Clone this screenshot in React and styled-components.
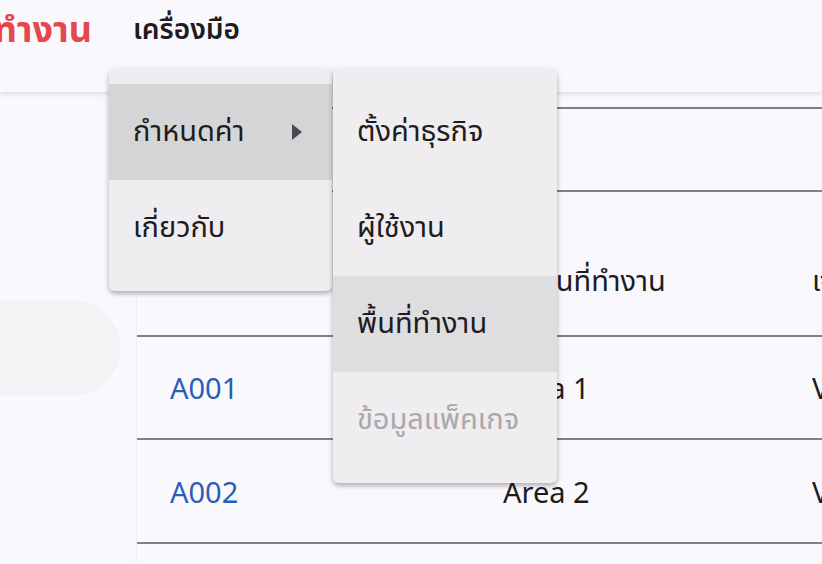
import React from "react";
import styled, { createGlobalStyle } from "styled-components";

const GlobalStyle = createGlobalStyle`
  html, body { margin: 0; padding: 0; }
  body {
    width: 822px;
    height: 564px;
    overflow: hidden;
    background: #f9f8fd;
    font-family: "Noto Sans", "Noto Sans Thai", sans-serif;
    color: #1d1c20;
  }
  * { box-sizing: border-box; }
`;

const Page = styled.div`
  position: relative;
  width: 822px;
  height: 564px;
  overflow: hidden;
  display: flex;
  flex-direction: column;
`;

const TopBar = styled.header`
  height: 92px;
  flex: none;
  display: flex;
  align-items: flex-start;
  gap: 41px;
  padding-top: 6px;
  background: #f9f8fd;
  box-shadow: 0 2px 5px rgba(0, 0, 0, 0.12);
  position: relative;
  z-index: 2;
`;

const TitleSlot = styled.div`
  width: 92px;
  flex: none;
  display: flex;
  justify-content: flex-end;
`;

const Title = styled.div`
  font-size: 36px;
  font-weight: 700;
  color: #e4484b;
  line-height: 46px;
  white-space: nowrap;
  flex: none;
`;

const NavItem = styled.div`
  font-size: 28px;
  font-weight: 600;
  line-height: 44px;
  color: #1d1c20;
  white-space: nowrap;
`;

const Body = styled.div`
  flex: 1;
  display: flex;
  min-height: 0;
`;

const Sidebar = styled.aside`
  width: 137px;
  flex: none;
  padding-top: 208px;
  background: #f9f8fd;
`;

const SidePill = styled.div`
  width: 120px;
  height: 96px;
  border-radius: 0 48px 48px 0;
  background: #f2f3f5;
`;

const Main = styled.main`
  flex: 1;
  background: #f9f8fd;
  box-shadow: -1px 0 2px rgba(0, 0, 0, 0.05);
  padding-top: 15px;
  white-space: nowrap;
`;

const Row = styled.div`
  display: grid;
  grid-template-columns: 333px 309px 200px;
  align-items: center;
  height: ${(p) => p.$h}px;
  border-top: 2px solid #808185;
  padding-left: 33px;
  padding-top: ${(p) => p.$pt || 0}px;
  font-size: 29px;
`;

const Cell = styled.div`
  color: ${(p) => (p.$link ? "#2a5db8" : "#1d1c20")};
  white-space: nowrap;
`;

const Menu = styled.div`
  position: absolute;
  top: 69px;
  left: ${(p) => p.$left}px;
  width: ${(p) => p.$w}px;
  padding: 15px 0;
  background: #efedf0;
  border-radius: 6px;
  box-shadow: 0 3px 4px rgba(0, 0, 0, 0.22), 0 1px 8px rgba(0, 0, 0, 0.1);
  z-index: 5;
`;

const MenuItem = styled.div`
  height: 96px;
  display: flex;
  align-items: center;
  justify-content: space-between;
  padding: 0 30px 0 24px;
  font-size: 29px;
  background: ${(p) => p.$bg || "transparent"};
  color: ${(p) => (p.$disabled ? "#a9a8ab" : "#1d1c20")};
  white-space: nowrap;
`;

const Arrow = () => (
  <svg width="10" height="16" viewBox="0 0 10 16">
    <path d="M0 0 L10 8 L0 16 Z" fill="#4a494e" />
  </svg>
);

export default function App() {
  return (
    <>
      <GlobalStyle />
      <Page>
        <TopBar>
          <TitleSlot>
            <Title>พื้นที่ทำงาน</Title>
          </TitleSlot>
          <NavItem>เครื่องมือ</NavItem>
        </TopBar>
        <Body>
          <Sidebar>
            <SidePill />
          </Sidebar>
          <Main>
            <Row $h={83} />
            <Row $h={145} $pt={36}>
              <Cell>รหัสพื้นที่</Cell>
              <Cell>ชื่อพื้นที่ทำงาน</Cell>
              <Cell>เจ้าของ</Cell>
            </Row>
            <Row $h={103}>
              <Cell $link>A001</Cell>
              <Cell>Area 1</Cell>
              <Cell>Village</Cell>
            </Row>
            <Row $h={104}>
              <Cell $link>A002</Cell>
              <Cell>Area 2</Cell>
              <Cell>Village</Cell>
            </Row>
            <Row $h={104}>
              <Cell $link>A003</Cell>
              <Cell>Area 3</Cell>
              <Cell>Village</Cell>
            </Row>
          </Main>
        </Body>
        <Menu $left={109} $w={223}>
          <MenuItem $bg="#d5d5d7">
            <span>กำหนดค่า</span>
            <Arrow />
          </MenuItem>
          <MenuItem>เกี่ยวกับ</MenuItem>
        </Menu>
        <Menu $left={333} $w={224}>
          <MenuItem>ตั้งค่าธุรกิจ</MenuItem>
          <MenuItem>ผู้ใช้งาน</MenuItem>
          <MenuItem $bg="#dedde0">พื้นที่ทำงาน</MenuItem>
          <MenuItem $disabled>ข้อมูลแพ็คเกจ</MenuItem>
        </Menu>
      </Page>
    </>
  );
}
